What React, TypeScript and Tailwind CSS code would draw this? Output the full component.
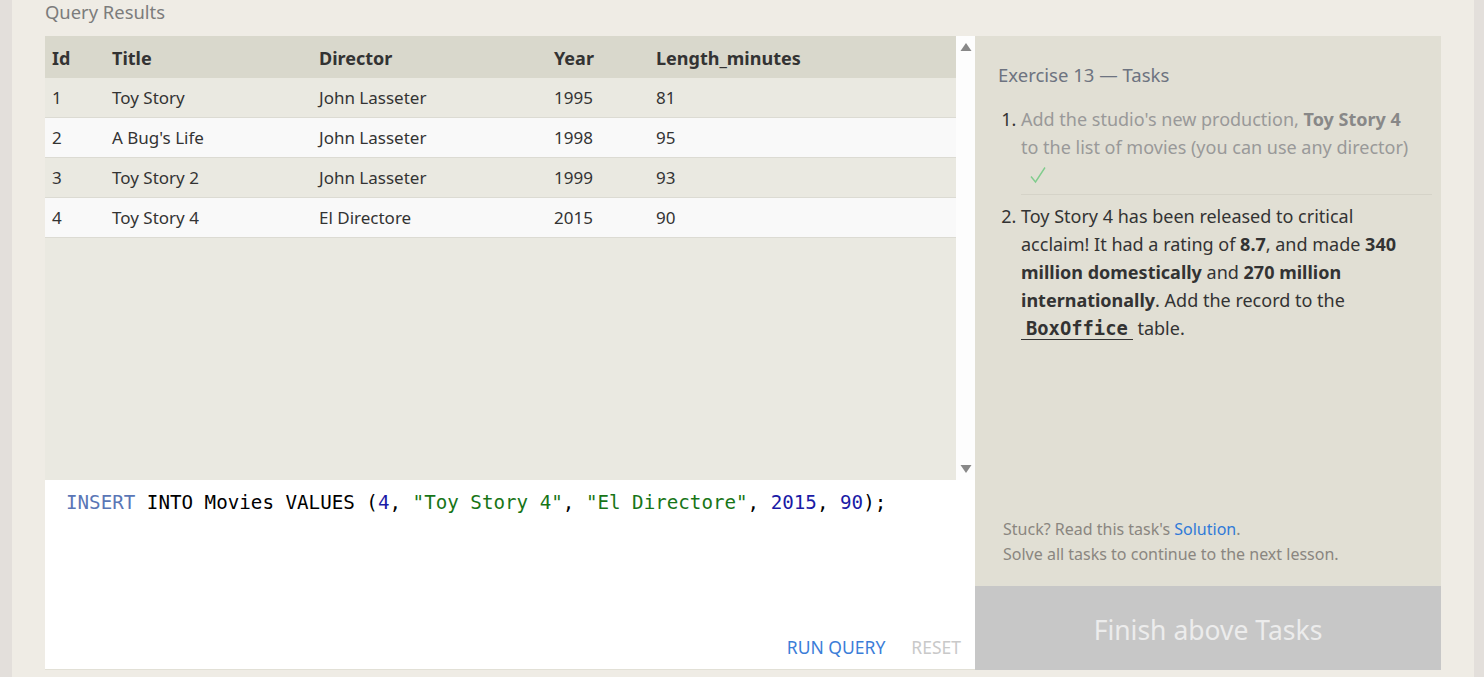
import React from 'react';

const sans = "font-['Noto_Sans',sans-serif]";
const mono = "font-['DejaVu_Sans_Mono',monospace]";

const rows = [
  { id: 1, title: 'Toy Story', director: 'John Lasseter', year: 1995, len: 81 },
  { id: 2, title: "A Bug's Life", director: 'John Lasseter', year: 1998, len: 95 },
  { id: 3, title: 'Toy Story 2', director: 'John Lasseter', year: 1999, len: 93 },
  { id: 4, title: 'Toy Story 4', director: 'El Directore', year: 2015, len: 90 },
];

const cols = 'grid grid-cols-[60px_207px_235px_102px_1fr]';

function ResultsTable() {
  return (
    <div className="flex h-[444px]">
      <div className="flex-1 bg-[#eae9e1] flex flex-col">
        {/* cabecera */}
        <div className={`${cols} h-[42px] items-center pt-[3px] bg-[#d9d8cc] text-[18px] font-bold text-[#333]`}>
          <div className="pl-[7px]">Id</div>
          <div className="pl-[7px]">Title</div>
          <div className="pl-[7px]">Director</div>
          <div className="pl-[7px]">Year</div>
          <div className="pl-[7px]">Length_minutes</div>
        </div>
        {rows.map((r, i) => (
          <div
            key={r.id}
            className={`${cols} h-[40px] items-center pt-[1px] text-[17px] text-[#333] border-b border-[#dcdbd3] ${
              i % 2 === 0 ? 'bg-[#eae9e1]' : 'bg-[#f9f9f9]'
            }`}
          >
            <div className="pl-[7px]">{r.id}</div>
            <div className="pl-[7px]">{r.title}</div>
            <div className="pl-[7px]">{r.director}</div>
            <div className="pl-[7px]">{r.year}</div>
            <div className="pl-[7px]">{r.len}</div>
          </div>
        ))}
      </div>
      {/* scrollbar */}
      <div className="w-[19px] bg-[#fdfdfd] flex flex-col items-center justify-between py-[6px]">
        <svg width="12" height="10" viewBox="0 0 12 10">
          <path d="M6 1 L11.5 9 L0.5 9 Z" fill="#888" />
        </svg>
        <svg width="12" height="10" viewBox="0 0 12 10">
          <path d="M0.5 1 L11.5 1 L6 9 Z" fill="#888" />
        </svg>
      </div>
    </div>
  );
}

function Editor() {
  return (
    <div className="h-[190px] bg-white flex flex-col justify-between border-b border-[#e2e0d6]">
      <div className={`${mono} text-[19.2px] leading-[24px] pl-[21px] pt-[11px] text-black whitespace-pre`}>
        <span className="text-[#5a76b6]">INSERT</span>
        {' INTO Movies VALUES ('}
        <span className="text-[#1a1aa6]">4</span>
        {', '}
        <span className="text-[#177517]">"Toy Story 4"</span>
        {', '}
        <span className="text-[#177517]">"El Directore"</span>
        {', '}
        <span className="text-[#1a1aa6]">2015</span>
        {', '}
        <span className="text-[#1a1aa6]">90</span>
        {');'}
      </div>
      <div className="flex justify-end gap-[26px] pr-[14px] pb-[9px] text-[17.5px]">
        <span className="text-[#3b7dd8]">RUN QUERY</span>
        <span className="text-[#c9c9c9]">RESET</span>
      </div>
    </div>
  );
}

function Check() {
  return (
    <svg width="18" height="18" viewBox="0 0 18 18" className="ml-[8px]">
      <path d="M2 10.5 L6.5 16 L16 1.5" fill="none" stroke="#80cc8d" strokeWidth="1.4" />
    </svg>
  );
}

function Tasks() {
  return (
    <div className="w-[466px] flex flex-col">
      <div className="h-[550px] bg-[#e1dfd4] pl-[23px] pr-[9px] flex flex-col justify-between">
        <div>
          <h2 className="text-[18.5px] text-[#6d7380] pt-[25px] leading-[28px]">Exercise 13 — Tasks</h2>
          <ol className="list-decimal pl-[23px] mt-[16px] text-[18px] leading-[28px] text-[#333]">
            <li className="border-b border-[#d5d3c8] pb-[5px]">
              <div className="w-[400px]">
                <span className="text-[#999]">
                  Add the studio's new production, <b className="text-[#888]">Toy Story 4</b> to the list of movies
                  (you can use any director)
                </span>
              </div>
              <div className="h-[28px] pt-[5px]">
                <Check />
              </div>
            </li>
            <li className="pt-[7px]">
              <div className="w-[400px]">
                Toy Story 4 has been released to critical acclaim! It had a rating of <b>8.7</b>, and made{' '}
                <b>340 million domestically</b> and <b>270 million internationally</b>. Add the record to the{' '}
                <span className={`${mono} font-bold text-[18.8px] px-[5px] border-b border-[#333]`}>BoxOffice</span>{' '}
                table.
              </div>
            </li>
          </ol>
        </div>
        <div className="pl-[5px] pb-[19px] text-[16px] leading-[25px] text-[#8a8680]">
          <div>
            Stuck? Read this task's <span className="text-[#2f7ad8]">Solution</span>.
          </div>
          <div>Solve all tasks to continue to the next lesson.</div>
        </div>
      </div>
      <div className="h-[84px] bg-[#c7c7c7] flex items-center justify-center pt-[5px] text-[26.5px] text-[#ececec]">
        Finish above Tasks
      </div>
    </div>
  );
}

export default function App() {
  return (
    <div className={`${sans} w-[1484px] h-[677px] bg-[#e3dfdb] overflow-hidden`}>
      <div className="ml-[12px] w-[1462px] h-full bg-[#efece5] px-[33px]">
        <div className="h-[36px] text-[18.4px] text-[#7c7c7c] leading-[24px]">Query Results</div>
        <div className="flex">
          <div className="w-[930px] flex flex-col">
            <ResultsTable />
            <Editor />
          </div>
          <Tasks />
        </div>
      </div>
    </div>
  );
}
